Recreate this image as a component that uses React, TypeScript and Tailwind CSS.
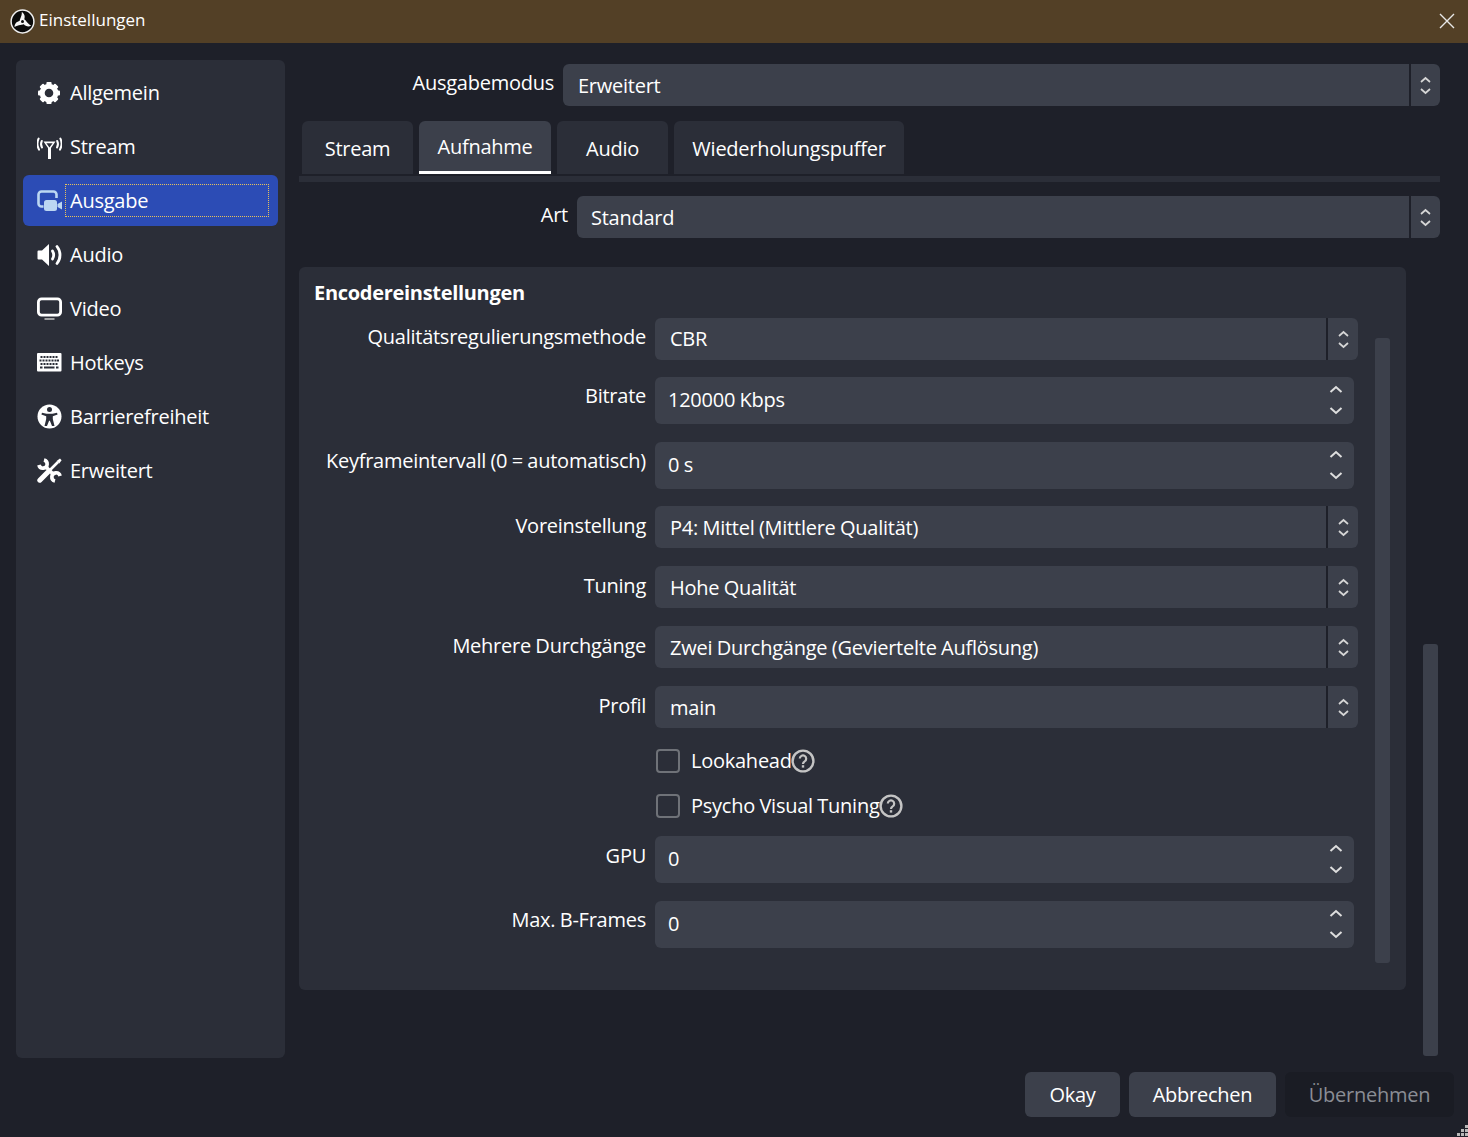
import React from "react";

const ObsLogo = () => (
  <svg width="25" height="25" viewBox="-12.5 -12.5 25 25" className="shrink-0">
    <circle r="11.4" fill="#0a0a0a" stroke="#eeeeee" strokeWidth="1.5" />
    <g fill="#f4f4f4">
      {[-40, 80, 200].map((a) => (
        <path key={a} transform={`rotate(${a})`} d="M-3.2 -0.6 C-1.4 -4 3 -4 5.6 -7.8 C7 -4 4.4 -0.4 0.6 0 C-1 0.1 -2.4 -0.1 -3.2 -0.6Z" />
      ))}
    </g>
    <circle r="1.5" fill="#0a0a0a" />
  </svg>
);

const GearIcon = () => (
  <svg width="24" height="24" viewBox="-12 -12 24 24" fill="none">
    <circle r="6.8" stroke="#fff" strokeWidth="5" />
    {[0, 45, 90, 135, 180, 225, 270, 315].map((a) => (
      <rect key={a} transform={`rotate(${a})`} x="-2.6" y="-11" width="5.2" height="4" rx="1" fill="#fff" />
    ))}
  </svg>
);

const AntennaIcon = () => (
  <svg width="25" height="24" viewBox="0 0 25 24" fill="none" stroke="#fff" strokeWidth="2" strokeLinecap="round">
    <path d="M4.8 6 C3.8 8 3.8 10.5 5 12.5" />
    <path d="M1.6 3.6 C0 7 0 11 2 14.6" />
    <path d="M20.2 6 C21.2 8 21.2 10.5 20 12.5" />
    <path d="M23.4 3.6 C25 7 25 11 23 14.6" />
    <path d="M6.5 6.5 H18.5 L14 13 V24 H11 V13 Z" fill="#fff" stroke="none" />
    <path d="M9.4 8.2 H15.6 L12.5 12.6 Z" fill="#2b2e38" stroke="none" />
  </svg>
);

const OutputIcon = () => (
  <svg width="25" height="24" viewBox="0 0 25 24" fill="none">
    <path d="M6.5 17.5 H4.5 A3 3 0 0 1 1.5 14.5 V5.5 A3 3 0 0 1 4.5 2.5 H16.5 A3 3 0 0 1 19.5 5.5 V9" stroke="#bcd7f2" strokeWidth="2.6" />
    <rect x="7" y="11" width="13" height="11" rx="2.5" fill="#bcd7f2" />
    <path d="M20.5 15 L25 12.5 V20.5 L20.5 18 Z" fill="#bcd7f2" />
  </svg>
);

const SpeakerIcon = () => (
  <svg width="25" height="24" viewBox="0 0 25 24" fill="none">
    <path d="M0.5 8.5 Q0.5 7.5 1.5 7.5 H5 L12 1 V23 L5 16.5 H1.5 Q0.5 16.5 0.5 15.5 Z" fill="#fff" />
    <path d="M15.5 8 C17 10.5 17 13.5 15.5 16" stroke="#fff" strokeWidth="2.8" strokeLinecap="round" />
    <path d="M20 3.5 C24 8.5 24 15.5 20 20.5" stroke="#fff" strokeWidth="2.8" strokeLinecap="round" />
  </svg>
);

const MonitorIcon = () => (
  <svg width="25" height="24" viewBox="0 0 25 24" fill="none">
    <rect x="1.4" y="1.9" width="22.2" height="16.2" rx="3.2" stroke="#fff" strokeWidth="2.8" />
    <path d="M7.5 22 H17.5" stroke="#bdbdbd" strokeWidth="1.6" />
  </svg>
);

const KeyboardIcon = () => (
  <svg width="25" height="19" viewBox="0 0 25 19">
    <rect width="24.5" height="18.5" rx="1" fill="#fff" />
    <g fill="#2b2e38">
      {[3.5, 6.5, 9.5, 12.5, 15.5, 18.5].map((x) => (
        <rect key={x} x={x} y="3" width="2" height="2" />
      ))}
      {[2.5, 5.5, 8.5, 11.5, 14.5, 17.5, 20].map((x) => (
        <rect key={x} x={x} y="6.5" width="2" height="2" />
      ))}
      {[3.5, 6.5, 9.5, 12.5, 15.5, 18.5].map((x) => (
        <rect key={x} x={x} y="10" width="2" height="2" />
      ))}
      <rect x="3" y="13.5" width="2.5" height="2" />
      <rect x="7" y="13.5" width="10.5" height="2" />
      <rect x="19" y="13.5" width="2.5" height="2" />
    </g>
  </svg>
);

const AccessIcon = () => (
  <svg width="25" height="25" viewBox="0 0 25 25">
    <circle cx="12.5" cy="12.5" r="12" fill="#fff" />
    <circle cx="12.5" cy="5.6" r="2.5" fill="#2b2e38" />
    <path d="M5 8.7 L9.5 9.8 H15.5 L20 8.7 L20.6 10.6 L15.8 12.2 V15 L17.5 22 H15 L12.9 16.8 H12.1 L10 22 H7.5 L9.2 15 V12.2 L4.4 10.6 Z" fill="#2b2e38" />
  </svg>
);

const ToolsIcon = () => (
  <svg width="25" height="25" viewBox="0 0 25 25" fill="none" stroke="#fff">
    <path d="M1.9 7 A4.2 4.2 0 1 0 7 1.9" strokeWidth="3.6" />
    <path d="M23.1 18 A4.2 4.2 0 1 0 18 23.1" strokeWidth="3.6" />
    <path d="M8 8 L17 17" strokeWidth="3.6" />
    <path d="M2.8 22.2 L10.5 14.5" strokeWidth="5" strokeLinecap="round" />
    <path d="M10.5 14.5 L21 4" strokeWidth="2.6" />
    <path d="M19.6 3 L23 0.6 L24.6 2.2 L22.2 5.6 Z" fill="#fff" stroke="none" />
  </svg>
);

const HelpIcon = () => (
  <svg width="24" height="24" viewBox="0 0 24 24" fill="none" className="shrink-0">
    <circle cx="12" cy="12" r="10.4" stroke="#c4c4c4" strokeWidth="2.4" />
    <path d="M8.8 9.6 A3.2 3.2 0 1 1 13.6 12.4 Q12 13.2 12 15" stroke="#c4c4c4" strokeWidth="2.2" />
    <rect x="10.8" y="16.2" width="2.4" height="2.4" fill="#c4c4c4" />
  </svg>
);

const Chevrons = ({ big }: { big?: boolean }) =>
  big ? (
    <svg width="14" height="30" viewBox="0 0 14 30" fill="none" stroke="#dedede" strokeWidth="2">
      <path d="M1.5 7 L7 2 L12.5 7" />
      <path d="M1.5 23 L7 28 L12.5 23" />
    </svg>
  ) : (
    <svg width="11" height="20" viewBox="0 0 11 20" fill="none" stroke="#d6d6d6" strokeWidth="1.7">
      <path d="M1 7 L5.5 3 L10 7" />
      <path d="M1 14 L5.5 18 L10 14" />
    </svg>
  );

const Combo = ({
  value,
  className,
  arrowW = "w-[31px]",
  text = "pl-[15px] pt-[2px]",
}: {
  value: string;
  className: string;
  arrowW?: string;
  text?: string;
}) => (
  <div className={`flex h-[42px] ${className}`}>
    <div className={`flex flex-1 items-center rounded-l-[6px] bg-[#3c404b] ${text}`}>{value}</div>
    <div className={`flex ${arrowW} items-center justify-center rounded-r-[6px] border-l-2 border-[#1e2029] bg-[#3c404b]`}>
      <Chevrons />
    </div>
  </div>
);

const Label = ({ text, h }: { text: string; h: string }) => (
  <div className={`flex ${h} w-[347px] shrink-0 items-center justify-end whitespace-nowrap`}>{text}</div>
);

const ComboRow = ({
  label,
  value,
  mb,
  h = "h-[40px]",
  text,
}: {
  label: string;
  value: string;
  mb: string;
  h?: string;
  text?: string;
}) => (
  <div className={`flex gap-[9px] ${mb}`}>
    <Label text={label} h={h} />
    <Combo value={value} className="w-[703px]" arrowW="w-[32px]" text={text} />
  </div>
);

const SpinRow = ({ label, value, mb, h = "h-[38px]" }: { label: string; value: string; mb: string; h?: string }) => (
  <div className={`flex gap-[9px] ${mb}`}>
    <Label text={label} h={h} />
    <div className="flex h-[47px] w-[699px] items-center justify-between rounded-[6px] bg-[#3c404b] pl-[13px] pr-[11px]">
      <span className="pb-[2px]">{value}</span>
      <span className="flex pb-[1px]">
        <Chevrons big />
      </span>
    </div>
  </div>
);

const CheckRow = ({ label, mb }: { label: string; mb: string }) => (
  <div className={`ml-[357px] flex h-[24px] items-center ${mb}`}>
    <span className="h-[24px] w-[24px] rounded-[4px] border-2 border-[#6f7278]" />
    <span className="ml-[11px] mr-[-1px]">{label}</span>
    <HelpIcon />
  </div>
);

const NavItem = ({ icon, label, active }: { icon: React.ReactNode; label: string; active?: boolean }) => (
  <div className={`flex h-[51px] items-center rounded-[6px] pl-[14px] ${active ? "bg-[#2c4cb5]" : ""}`}>
    <span className="flex w-[28px] shrink-0 items-center">{icon}</span>
    {active ? (
      <span className="flex h-[33px] w-[204px] items-center border border-dotted border-[#e8c35c] pl-[4px]">{label}</span>
    ) : (
      <span className="pl-[5px]">{label}</span>
    )}
  </div>
);

const Tab = ({ label, className, active }: { label: string; className: string; active?: boolean }) => (
  <div
    className={`flex h-[53px] items-center justify-center rounded-t-[6px] ${className} ${
      active ? "border-b-[3px] border-white bg-[#3c404b] pt-[1px]" : "bg-[#2b2e38] pt-[3px]"
    }`}
  >
    {label}
  </div>
);

const Btn = ({ label, className }: { label: string; className: string }) => (
  <div className={`flex h-[45px] items-center justify-center rounded-[6px] ${className}`}>{label}</div>
);

export default function App() {
  return (
    <div className="relative flex h-screen w-screen flex-col overflow-hidden bg-[#1e2029] font-['Open_Sans',sans-serif] text-[20px] tracking-[-0.25px] text-white [word-spacing:-0.5px]">
      <div className="flex h-[43px] shrink-0 items-center justify-between bg-[#534026] pl-[10px] pr-[13px]">
        <div className="flex items-center gap-[4px] text-[17px] tracking-normal">
          <ObsLogo />
          <span className="pb-[3px]">Einstellungen</span>
        </div>
        <svg width="16" height="16" viewBox="0 0 16 16" stroke="#e8e8e8" strokeWidth="1.4" className="mb-[1px]">
          <path d="M1 1 L15 15 M15 1 L1 15" />
        </svg>
      </div>

      <div className="flex flex-1 gap-[14px] pl-[16px] pt-[17px]">
        <aside className="flex h-[998px] w-[269px] shrink-0 flex-col gap-[3px] rounded-[6px] bg-[#2b2e38] px-[7px] pt-[7px]">
          <NavItem icon={<GearIcon />} label="Allgemein" />
          <NavItem icon={<AntennaIcon />} label="Stream" />
          <NavItem icon={<OutputIcon />} label="Ausgabe" active />
          <NavItem icon={<SpeakerIcon />} label="Audio" />
          <NavItem icon={<MonitorIcon />} label="Video" />
          <NavItem icon={<KeyboardIcon />} label="Hotkeys" />
          <NavItem icon={<AccessIcon />} label="Barrierefreiheit" />
          <NavItem icon={<ToolsIcon />} label="Erweitert" />
        </aside>

        <div className="relative flex-1 pr-[28px] pt-[4px]">
          <div className="flex items-center gap-[9px]">
            <span className="w-[255px] shrink-0 pb-[4px] text-right">Ausgabemodus</span>
            <Combo value="Erweitert" className="flex-1" />
          </div>

          <div className="mt-[15px] flex gap-[6px] pl-[3px]">
            <Tab label="Stream" className="w-[111px]" />
            <Tab label="Aufnahme" className="w-[132px]" active />
            <Tab label="Audio" className="w-[111px]" />
            <Tab label="Wiederholungspuffer" className="w-[230px]" />
          </div>
          <div className="mt-[2px] h-[6px] bg-[#2b2e38]" />

          <div className="mt-[14px] flex items-center gap-[9px]">
            <span className="w-[269px] shrink-0 pb-[4px] text-right">Art</span>
            <Combo value="Standard" className="flex-1" text="pl-[14px] pt-[2px]" />
          </div>

          <div className="mt-[29px] h-[723px] w-[1107px] rounded-[6px] bg-[#2b2e38] pt-[12px]">
            <div className="mb-[9px] h-[30px] pl-[15px] font-bold leading-[28px] tracking-[-0.3px]">Encodereinstellungen</div>
            <ComboRow label="Qualitätsregulierungsmethode" value="CBR" mb="mb-[17px]" h="h-[38px]" text="pl-[15px]" />
            <SpinRow label="Bitrate" value="120000 Kbps" mb="mb-[18px]" />
            <SpinRow label="Keyframeintervall (0 = automatisch)" value="0 s" mb="mb-[17px]" />
            <ComboRow label="Voreinstellung" value="P4: Mittel (Mittlere Qualität)" mb="mb-[18px]" />
            <ComboRow label="Tuning" value="Hohe Qualität" mb="mb-[18px]" />
            <ComboRow label="Mehrere Durchgänge" value="Zwei Durchgänge (Geviertelte Auflösung)" mb="mb-[18px]" />
            <ComboRow label="Profil" value="main" mb="mb-[21px]" />
            <CheckRow label="Lookahead" mb="mb-[21px]" />
            <CheckRow label="Psycho Visual Tuning" mb="mb-[18px]" />
            <SpinRow label="GPU" value="0" mb="mb-[18px]" h="h-[40px]" />
            <SpinRow label="Max. B-Frames" value="0" mb="" />
          </div>

          <div className="absolute left-[1076px] top-[278px] h-[625px] w-[15px] rounded-[3px] bg-[#3c404b]" />
          <div className="absolute left-[1124px] top-[584px] h-[412px] w-[15px] rounded-[3px] bg-[#3c404b]" />
        </div>
      </div>

      <div className="flex h-[79px] shrink-0 justify-end gap-[9px] pr-[14px] pt-[14px]">
        <Btn label="Okay" className="w-[95px] bg-[#3c404b]" />
        <Btn label="Abbrechen" className="w-[147px] bg-[#3c404b]" />
        <Btn label="Übernehmen" className="w-[169px] bg-[#1a1c24] text-[#8a8d94]" />
      </div>

      <svg width="12" height="12" viewBox="0 0 12 12" fill="#b8b8b8" className="absolute bottom-0 right-0">
        <rect x="9" y="0" width="3" height="3" />
        <rect x="5" y="4" width="3" height="3" />
        <rect x="9" y="4" width="3" height="3" />
        <rect x="1" y="8" width="3" height="3" />
        <rect x="5" y="8" width="3" height="3" />
        <rect x="9" y="8" width="3" height="3" />
      </svg>
    </div>
  );
}
